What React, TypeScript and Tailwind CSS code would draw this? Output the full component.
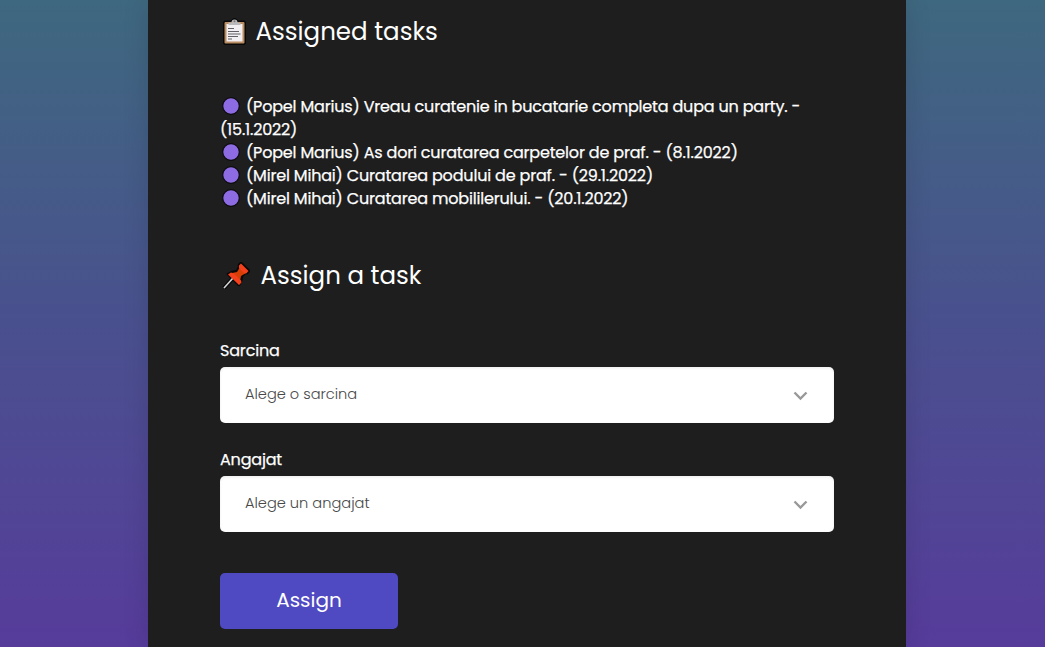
import React from "react";

const tasks = [
  "(Popel Marius) Vreau curatenie in bucatarie completa dupa un party. - (15.1.2022)",
  "(Popel Marius) As dori curatarea carpetelor de praf. - (8.1.2022)",
  "(Mirel Mihai) Curatarea podului de praf. - (29.1.2022)",
  "(Mirel Mihai) Curatarea mobililerului. - (20.1.2022)",
];

function Clipboard() {
  return (
    <svg width="24" height="28" viewBox="0 0 24 28" className="ml-[3px] shrink-0" aria-hidden="true">
      <path d="M1.500 2.500h6l2-1.500 1-1h2l1 1 2 1.500h6L23 4v21.500L21.500 27h-20L0 25.500V4z" fill="#080808" />
      <rect x="1.500" y="4" width="20" height="21.500" rx="1" fill="#b98c61" />
      <path d="M3.500 6h16v17.500h-16z" fill="#f1eff2" />
      <path d="M5.500 4.500h3a3 3 0 0 1 6 0h3v2.500h-12z" fill="#b9b9bb" />
      <circle cx="11.500" cy="3.300" r="1" fill="#77777c" />
      <path d="M5 10.500h6M5 13.500h11M5 16h12.500M5 18.500h10M5 21h4" stroke="#606066" strokeWidth="1.100" />
    </svg>
  );
}

function Pin() {
  return (
    <svg width="28" height="28" viewBox="0 0 28 28" className="ml-0.5 shrink-0" aria-hidden="true">
      <path d="M2 26l9-10" stroke="#080808" strokeWidth="4" />
      <path d="M6 12l4-2 5-1 2-4v-2l2-2 8 8-2 2h-2l-3 3-1 5-2 4z" fill="#080808" stroke="#080808" strokeWidth="2.500" strokeLinejoin="round" />
      <path d="M2 26l9-10" stroke="#d4d4d4" strokeWidth="1.600" />
      <path d="M10 11l5-1 3-5 6 6-5 3-1 5z" fill="#d63f05" />
      <path d="M6 12.500l3-2 3 1 7 7 .5 2L17 23zM17 3.500l2-2 7.500 7.500-2 2.200-2 .3L17 6z" fill="#f4401b" />
    </svg>
  );
}

function Dot() {
  return (
    <svg width="18" height="18" viewBox="0 0 18 18" className="mr-[6px] ml-[2px] inline-block align-[-3px]" aria-hidden="true">
      <circle cx="9" cy="9" r="8.300" fill="#8c6be3" stroke="#0b0b0d" strokeWidth="1.200" />
    </svg>
  );
}

function Field({ label, placeholder }: { label: string; placeholder: string }) {
  return (
    <div>
      <div className="h-[27px] text-[16px] leading-[21px] tracking-[-0.18px] text-white [-webkit-text-stroke:0.25px_white]">{label}</div>
      <button className="flex h-14 w-full items-center justify-between rounded-[5px] bg-white pr-[26px] pl-[25px] shadow-[inset_0_1px_3px_rgba(0,0,0,0.08)]">
        <span className="text-[14.600px] font-light text-[#484848]">{placeholder}</span>
        <svg width="15" height="10" viewBox="0 0 15 10" className="mt-0.5" aria-hidden="true">
          <path d="M1.500 1.500l6 6 6-6" fill="none" stroke="#999" strokeWidth="2.400" />
        </svg>
      </button>
    </div>
  );
}

export default function App() {
  return (
    <div className="flex h-[647px] w-full overflow-hidden bg-linear-to-b from-[#3e687f] via-[#49508e] to-[#563b9b] pl-[148px] font-[Poppins,Inter,sans-serif]">
      <main className="flex h-full w-[758px] flex-col bg-[#1e1e1e] pr-[72px] pl-[72px] text-white shadow-[0_0_25px_rgba(0,0,0,0.12)]">
        <h2 className="mt-[14px] flex h-9 items-center text-[24.500px]">
          <Clipboard />
          <span className="ml-[8.500px]">Assigned tasks</span>
        </h2>
        <ul className="mt-[45px] text-[16px] leading-[23px] tracking-[-0.18px] [-webkit-text-stroke:0.25px_white]">
          {tasks.map((t) => (
            <li key={t}>
              <Dot />
              <span>{t}</span>
            </li>
          ))}
        </ul>
        <h2 className="mt-[48px] flex h-9 items-center text-[24.500px]">
          <Pin />
          <span className="ml-[10.500px]">Assign a task</span>
        </h2>
        <div className="mt-[46px] flex flex-col gap-[26px]">
          <Field label="Sarcina" placeholder="Alege o sarcina" />
          <Field label="Angajat" placeholder="Alege un angajat" />
        </div>
        <button className="mt-[41px] h-14 w-[178px] rounded-[5px] bg-[#4f49c2] pb-0.5 text-[20px]">Assign</button>
      </main>
    </div>
  );
}
